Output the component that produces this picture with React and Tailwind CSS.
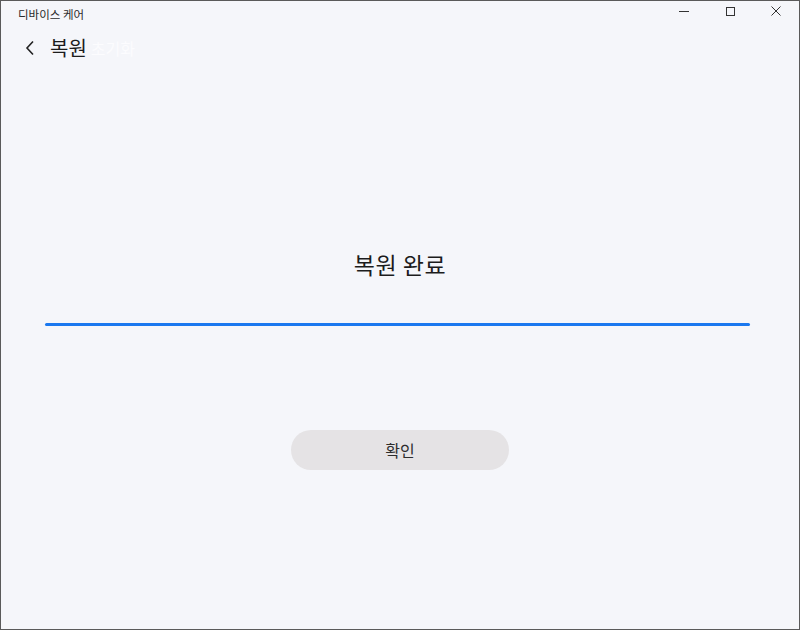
import React from 'react';

const font = { fontFamily: '"Noto Sans CJK KR", "Noto Sans", sans-serif' };

const App = () => {
  return (
    <div
      className="w-[800px] h-[630px] bg-[#f5f6fa] border border-[#5a5a5a] flex flex-col text-[#1c1c1c]"
      style={font}
    >
      {/* title bar */}
      <div className="flex items-start h-[28px] shrink-0">
        <div className="pl-[17px] pt-[5px] text-[11.5px] text-[#2a2a2a]">디바이스 케어</div>
        <div className="ml-auto flex">
          <div className="w-[46px] h-[20px] flex items-center justify-center">
            <div className="w-[10px] h-px bg-[#333]" />
          </div>
          <div className="w-[46px] h-[20px] flex items-center justify-center">
            <div className="w-[9px] h-[9px] border border-[#333]" />
          </div>
          <div className="w-[46px] h-[20px] flex items-center justify-center">
            <svg width="10" height="10" viewBox="0 0 10 10" stroke="#333" strokeWidth="1">
              <path d="M0.5 0.5 L9.5 9.5 M9.5 0.5 L0.5 9.5" />
            </svg>
          </div>
        </div>
      </div>

      {/* header */}
      <div className="flex items-center h-[38px] pl-[24px]">
        <svg width="10" height="16" viewBox="0 0 10 16" fill="none" stroke="#222" strokeWidth="1.6">
          <path d="M8 1.5 L2 8 L8 14.5" />
        </svg>
        <span className="ml-[15px] text-[20px] leading-none">복원</span>
        <span className="ml-[4px] text-[16px] leading-none text-[#fcfcfe]">초기화</span>
      </div>

      {/* content */}
      <div className="flex flex-col items-center">
        <div className="mt-[186px] text-[23px] leading-none tracking-[0.5px]">복원 완료</div>
        <div className="mt-[47px] w-[705px] h-[3px] rounded-full bg-[#1a78ef] ml-[-5px]" />
        <button className="mt-[104px] w-[218px] h-[40px] rounded-full bg-[#e5e3e5] text-[16px] text-[#2e2e2e]">
          확인
        </button>
      </div>
    </div>
  );
};

export default App;
